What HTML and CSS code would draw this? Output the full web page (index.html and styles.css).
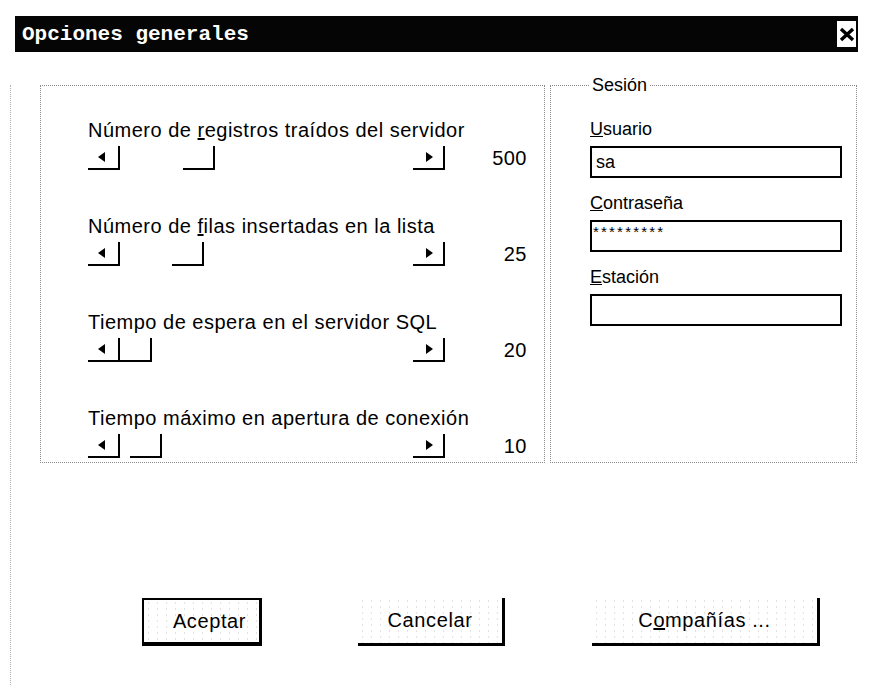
FILE: index.html
```html
<!DOCTYPE html>
<html>
<head>
<title>Opciones generales</title>
<meta charset="UTF-8" />
<link rel="stylesheet" href="styles.css">
</head>
<body>
<div class="titlebar">
	<span class="title">Opciones generales</span>
	<span class="close"><svg width="18" height="22" viewBox="0 0 18 22"><path d="M3 6 L15 17 M15 6 L3 17" stroke="#000" stroke-width="3.4" /></svg></span>
</div>
<div class="dialog">
	<div class="panels">
		<div class="group limits">
			<div class="setting">
				<div class="label">Número de <u>r</u>egistros traídos del servidor</div>
				<div class="control">
					<div class="scroll"><span class="btn left"></span><span class="thumb" style="margin-left:63px"></span><span class="btn right"></span></div>
					<span class="value">500</span>
				</div>
			</div>
			<div class="setting">
				<div class="label">Número de <u>f</u>ilas insertadas en la lista</div>
				<div class="control">
					<div class="scroll"><span class="btn left"></span><span class="thumb" style="margin-left:52px"></span><span class="btn right"></span></div>
					<span class="value">25</span>
				</div>
			</div>
			<div class="setting">
				<div class="label">Tiempo de espera en el servidor SQL</div>
				<div class="control">
					<div class="scroll"><span class="btn left"></span><span class="thumb" style="margin-left:0px"></span><span class="btn right"></span></div>
					<span class="value">20</span>
				</div>
			</div>
			<div class="setting">
				<div class="label">Tiempo máximo en apertura de conexión</div>
				<div class="control">
					<div class="scroll"><span class="btn left"></span><span class="thumb" style="margin-left:10px"></span><span class="btn right"></span></div>
					<span class="value">10</span>
				</div>
			</div>
		</div>
		<div class="group session">
			<span class="legend">Sesión</span>
			<div class="field">
				<div class="label"><u>U</u>suario</div>
				<div class="box">sa</div>
			</div>
			<div class="field">
				<div class="label"><u>C</u>ontraseña</div>
				<div class="box secret">*********</div>
			</div>
			<div class="field">
				<div class="label"><u>E</u>stación</div>
				<div class="box"></div>
			</div>
		</div>
	</div>
	<div class="actions">
		<span class="button default">Aceptar</span>
		<span class="button cancel">Cancelar</span>
		<span class="button firms">C<u>o</u>mpañías ...</span>
	</div>
</div>
</body>
</html>
```

FILE: styles.css
```css
body{
	margin: 0 ;
	background: #fff ;
	font-family: "Liberation Sans", Arial, sans-serif ;
	font-size: 18px ;
	color: #000 ;
}
.titlebar{
	margin: 16px 14px 0 15px ;
	height: 36px ;
	background: #050505 ;
	display: flex ;
	align-items: center ;
	justify-content: space-between ;
	padding: 0 2px 0 7px ;
}
.title{
	font-family: "Liberation Mono", monospace ;
	font-size: 21px ;
	font-weight: bold ;
	color: #fff ;
}
.close{
	width: 19px ;
	height: 26px ;
	background: #fff ;
	display: flex ;
	align-items: center ;
	justify-content: center ;
}
.dialog{
	margin: 38px 0 0 10px ;
	border-left: 1px dotted #b0b0b0 ;
	height: 632px ;
}
.panels{
	display: flex ;
	gap: 5px ;
	padding: 0 0 0 29px ;
	margin-top: -5px ;
}
.group{
	border: 1px dotted #8a8a8a ;
	height: 378px ;
	position: relative ;
}
.limits{
	width: 505px ;
	padding: 34px 0 0 47px ;
	box-sizing: border-box ;
}
.session{
	width: 307px ;
	padding: 33px 0 0 39px ;
	box-sizing: border-box ;
}
.legend{
	position: absolute ;
	top: -11px ;
	left: 38px ;
	background: #fff ;
	padding: 0 3px ;
	line-height: 20px ;
}
.label{
	line-height: 20px ;
	white-space: nowrap ;
}
.limits .label{
	font-size: 20px ;
	letter-spacing: 0.5px ;
}
.setting{
	margin-bottom: 46px ;
}
.control{
	display: flex ;
	align-items: center ;
	margin-top: 6px ;
}
.scroll{
	width: 357px ;
	height: 24px ;
	display: flex ;
}
.btn, .thumb{
	width: 30px ;
	height: 22px ;
	border-right: 2px solid #000 ;
	border-bottom: 2px solid #000 ;
	position: relative ;
	flex: none ;
}
.btn.right{
	margin-left: auto ;
}
.btn:after{
	content: '' ;
	position: absolute ;
	top: 6px ;
	width: 0 ;
	height: 0 ;
	border-top: 5px solid transparent ;
	border-bottom: 5px solid transparent ;
}
.btn.left:after{
	left: 10px ;
	border-right: 7px solid #000 ;
}
.btn.right:after{
	left: 13px ;
	border-left: 7px solid #000 ;
}
.value{
	width: 82px ;
	text-align: right ;
	font-size: 20px ;
	letter-spacing: 0.5px ;
}
.field{
	margin-bottom: 15px ;
}
.box{
	margin-top: 7px ;
	width: 244px ;
	height: 28px ;
	border: 2px solid #000 ;
	font-size: 18px ;
	line-height: 28px ;
	padding-left: 4px ;
	box-sizing: content-box ;
}
.box.secret{
	font-size: 15px ;
	letter-spacing: 2.2px ;
	line-height: 20px ;
	padding-left: 1px ;
	width: 247px ;
}
.actions{
	display: flex ;
	margin-top: 135px ;
	padding-left: 131px ;
}
.button{
	height: 48px ;
	box-sizing: border-box ;
	display: flex ;
	align-items: center ;
	justify-content: center ;
	font-size: 20px ;
	letter-spacing: 0.6px ;
	background-color: #fff ;
	background-image: radial-gradient(#d0d0d0 0.6px, transparent 1px) ;
	background-size: 9px 6px ;
	border-right: 3px solid #000 ;
	border-bottom: 3px solid #000 ;
}
.default{
	width: 120px ;
	border: 2px solid #000 ;
	border-right-width: 3px ;
	border-bottom-width: 4px ;
	padding-left: 16px ;
}
.cancel{
	width: 147px ;
	margin-left: 96px ;
}
.firms{
	width: 228px ;
	margin-left: 87px ;
}
```
